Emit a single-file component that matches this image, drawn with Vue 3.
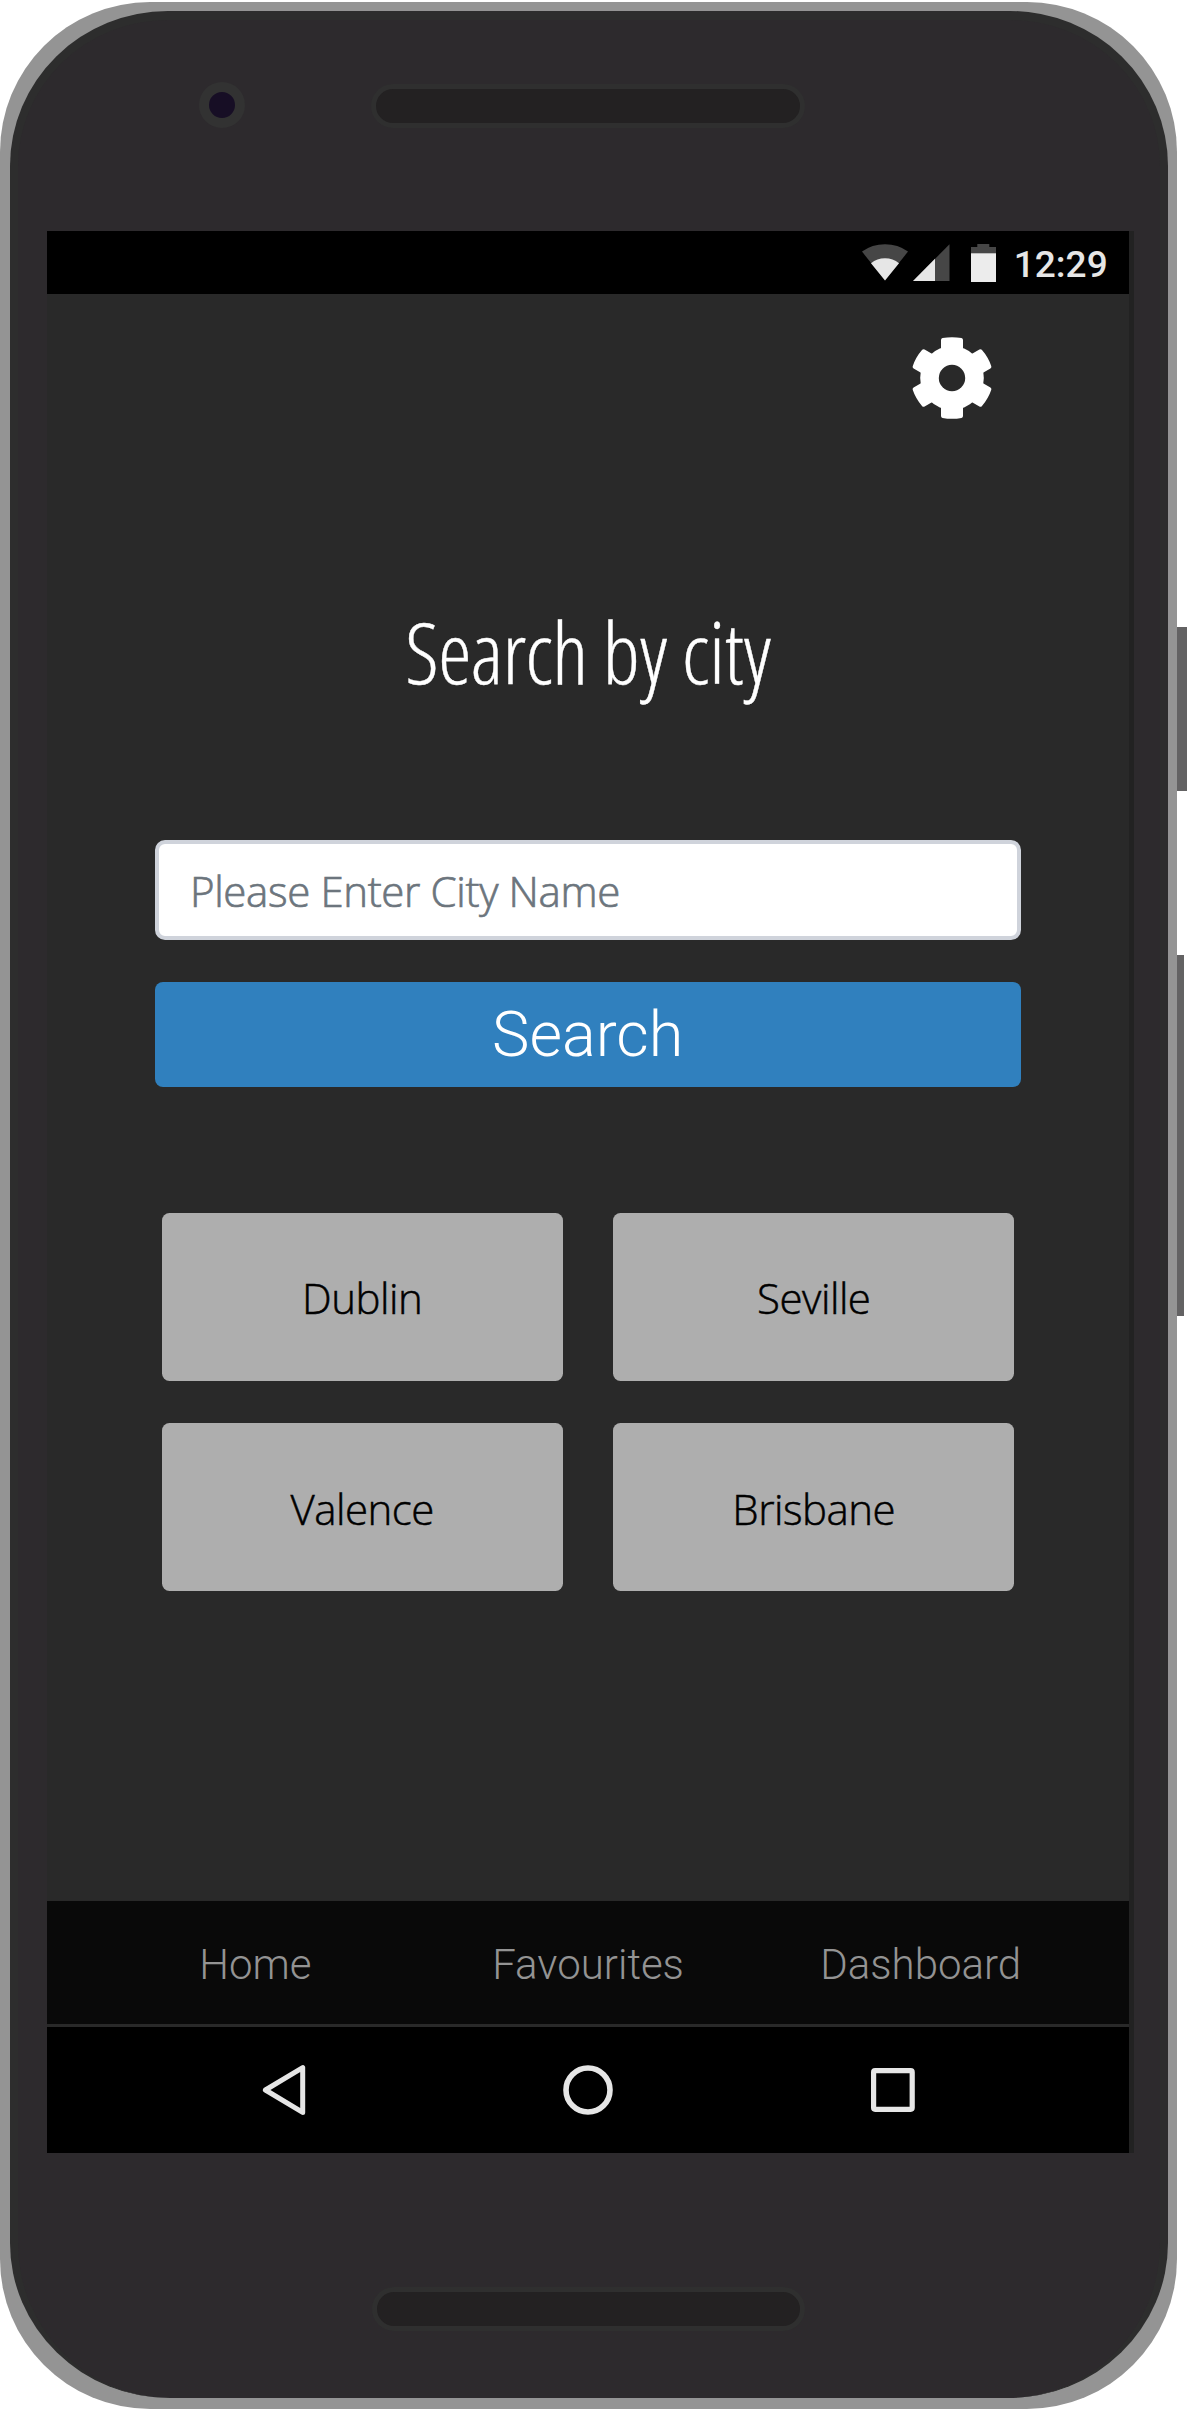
<script setup>
import { ref } from 'vue'

const city = ref('')
const cities = ['Dublin', 'Seville', 'Valence', 'Brisbane']
const tabs = ['Home', 'Favourites', 'Dashboard']
const teeth = [0, 60, 120, 180, 240, 300]
</script>

<template>
  <div class="stage">
    <div class="phone">
      <div class="face">
        <div class="top-bezel">
          <span class="camera"></span>
          <span class="speaker"></span>
        </div>

        <div class="screen">
          <header class="status">
            <svg class="wifi" width="46" height="37" viewBox="0 0 46 37">
              <path d="M0 7.6Q10 .3 23 .3T46 7.6L23 36.6Z" fill="#464646" />
              <path d="M9 19.2Q15 14.3 23 14.3T37 19.2L23 36.6Z" fill="#e6e6e6" />
            </svg>
            <svg class="signal" width="37" height="37" viewBox="0 0 37 37">
              <path d="M36.5 .3V37H0Z" fill="#464646" />
              <path d="M22 14.8V37H0Z" fill="#e6e6e6" />
            </svg>
            <svg class="battery" width="25" height="38" viewBox="0 0 25 38">
              <path d="M6.3 0H18.3V3H25V10H0V3H6.3Z" fill="#464646" />
              <path d="M0 9.3H25V38H0Z" fill="#ececec" />
            </svg>
            <span class="clock">12:29</span>
          </header>

          <main class="content">
            <button class="settings" type="button" aria-label="Settings">
              <svg width="84" height="84" viewBox="-42 -42 84 84">
                <g fill="#fff">
                  <path
                    v-for="a in teeth"
                    :key="a"
                    :transform="`rotate(${a})`"
                    d="M-11 -24V-38Q-11 -39.5 -9.5 -39.9Q0 -41.8 9.5 -39.9Q11 -39.5 11 -38V-24Z"
                  />
                  <circle r="31.8" />
                </g>
                <circle r="13.2" fill="#292929" />
              </svg>
            </button>

            <h1 class="title">Search by city</h1>

            <form class="search" @submit.prevent>
              <input v-model="city" class="field" type="text" placeholder="Please Enter City Name" />
              <button class="submit" type="submit">Search</button>
            </form>

            <div class="cities">
              <button v-for="name in cities" :key="name" class="city" type="button">{{ name }}</button>
            </div>
          </main>

          <nav class="tabs">
            <a v-for="tab in tabs" :key="tab" class="tab">{{ tab }}</a>
          </nav>

          <footer class="system">
            <svg width="52" height="52" viewBox="0 0 52 52">
              <path d="M7.4 26L44.7 3.6V48.4Z" fill="none" stroke="#e6e6e6" stroke-width="5" stroke-linejoin="round" />
            </svg>
            <svg width="52" height="52" viewBox="0 0 52 52">
              <circle cx="26" cy="26" r="22" fill="none" stroke="#e6e6e6" stroke-width="5.6" />
            </svg>
            <svg width="52" height="52" viewBox="0 0 52 52">
              <rect x="6.6" y="6.7" width="38.6" height="38.6" rx="1.5" fill="none" stroke="#e6e6e6" stroke-width="5.2" />
            </svg>
          </footer>
        </div>

        <span class="speaker bottom-speaker"></span>
      </div>
    </div>
    <div class="keys">
      <span class="key power"></span>
      <span class="key volume"></span>
    </div>
  </div>
</template>

<style>
body {
  margin: 0;
  background: #fff;
}
</style>

<style scoped>
* {
  box-sizing: border-box;
}
.stage {
  display: flex;
  width: 1187px;
  height: 2410px;
  background: #fff;
}
.phone {
  flex: none;
  width: 1177px;
  height: 2407.5px;
  margin-top: 1.5px;
  padding: 9px 9px 11px 10px;
  border-radius: 150px;
  background: #949494;
}
.face {
  display: flex;
  flex-direction: column;
  width: 1158px;
  height: 2387.5px;
  padding: 0.5px 0 0 29px;
  border: solid #2d2d2d;
  border-width: 9px 8px 0;
  border-radius: 158px 158px 160px 160px / 155px;
  background: #2d2a2d;
}
.top-bezel {
  display: flex;
  align-items: flex-start;
  flex: none;
  height: 211px;
}
.camera {
  width: 46px;
  height: 46px;
  margin: 62px 0 0 152.3px;
  border: 10px solid #323232;
  border-radius: 50%;
  background: #170e25;
}
.speaker {
  width: 433.5px;
  height: 43.5px;
  margin: 64px 0 0 126px;
  border: 5px solid #2f2f2f;
  border-radius: 22px;
  background: #232122;
}
.bottom-speaker {
  flex: none;
  margin: 134px 0 0 324.5px;
}
.screen {
  display: flex;
  flex-direction: column;
  flex: none;
  width: 1082px;
  height: 1922px;
  background: #292929;
  box-shadow: 5px 0 0 #222;
}
.status {
  display: flex;
  flex: none;
  height: 63px;
  padding-left: 815px;
  background: #000;
}
.status svg {
  flex: none;
  margin-top: 13px;
}
.status .signal {
  margin-left: 5px;
}
.status .battery {
  margin-left: 21px;
  margin-top: 12.5px;
}
.clock {
  margin-left: 17.8px;
  color: #e6e6e6;
  font: 500 37px/67px Roboto, sans-serif;
}
.content {
  display: flex;
  flex-direction: column;
  flex: none;
  height: 1606.5px;
  padding: 42px 108px 0;
}
.settings {
  width: 84px;
  height: 84px;
  margin: 0 0 0 755.3px;
  padding: 0;
  border: 0;
  background: none;
}
.settings svg {
  display: block;
}
.title {
  margin: 174px 0 0;
  color: #fff;
  font: 300 84px/116px "Open Sans", sans-serif;
  font-stretch: 75%;
  letter-spacing: -0.5px;
  text-align: center;
  -webkit-text-stroke: 0.4px #fff;
}
.search {
  display: flex;
  flex-direction: column;
  gap: 42px;
  width: 865.5px;
  margin-top: 130px;
}
.field {
  width: 865.5px;
  height: 99.7px;
  padding: 2px 30px 0 31px;
  border: 4px solid #cfd3db;
  border-radius: 10px;
  outline: none;
  background: #fff;
  color: #495057;
  font: 300 42px/58px "Open Sans", sans-serif;
  letter-spacing: -0.36px;
}
.field::placeholder {
  color: #6c757d;
  opacity: 1;
  -webkit-text-stroke: 0.7px #6c757d;
}
.submit {
  height: 105.2px;
  padding: 1px 0 0;
  border: 0;
  border-radius: 8px;
  background: #3080be;
  color: #fff;
  font: 300 63px/74px Roboto, sans-serif;
}
.cities {
  display: grid;
  grid-template-columns: 401px 401px;
  grid-auto-rows: 168.4px;
  gap: 41.8px 50.6px;
  margin: 125.8px 0 0 6.7px;
}
.city {
  padding: 3px 0 0;
  border: 0;
  border-radius: 7.5px;
  background: #aeaeae;
  color: #000;
  font: 300 42px/58px "Open Sans", sans-serif;
  letter-spacing: -0.5px;
  -webkit-text-stroke: 0.5px #000;
}
.tabs {
  display: grid;
  grid-template-columns: repeat(3, 332.7px);
  flex: none;
  height: 123.5px;
  padding-left: 42px;
  background: #090909;
}
.tab {
  color: #939393;
  font: 300 42px/127px Roboto, sans-serif;
  text-align: center;
}
.system {
  display: flex;
  align-items: center;
  gap: 252.4px;
  flex: none;
  height: 126px;
  margin-top: 3px;
  padding-left: 211px;
  background: #000;
}
.keys {
  width: 10px;
  padding-top: 627px;
}
.key {
  display: block;
  background: #636263;
}
.power {
  height: 164px;
}
.volume {
  width: 7px;
  height: 360.5px;
  margin-top: 164px;
}
</style>
